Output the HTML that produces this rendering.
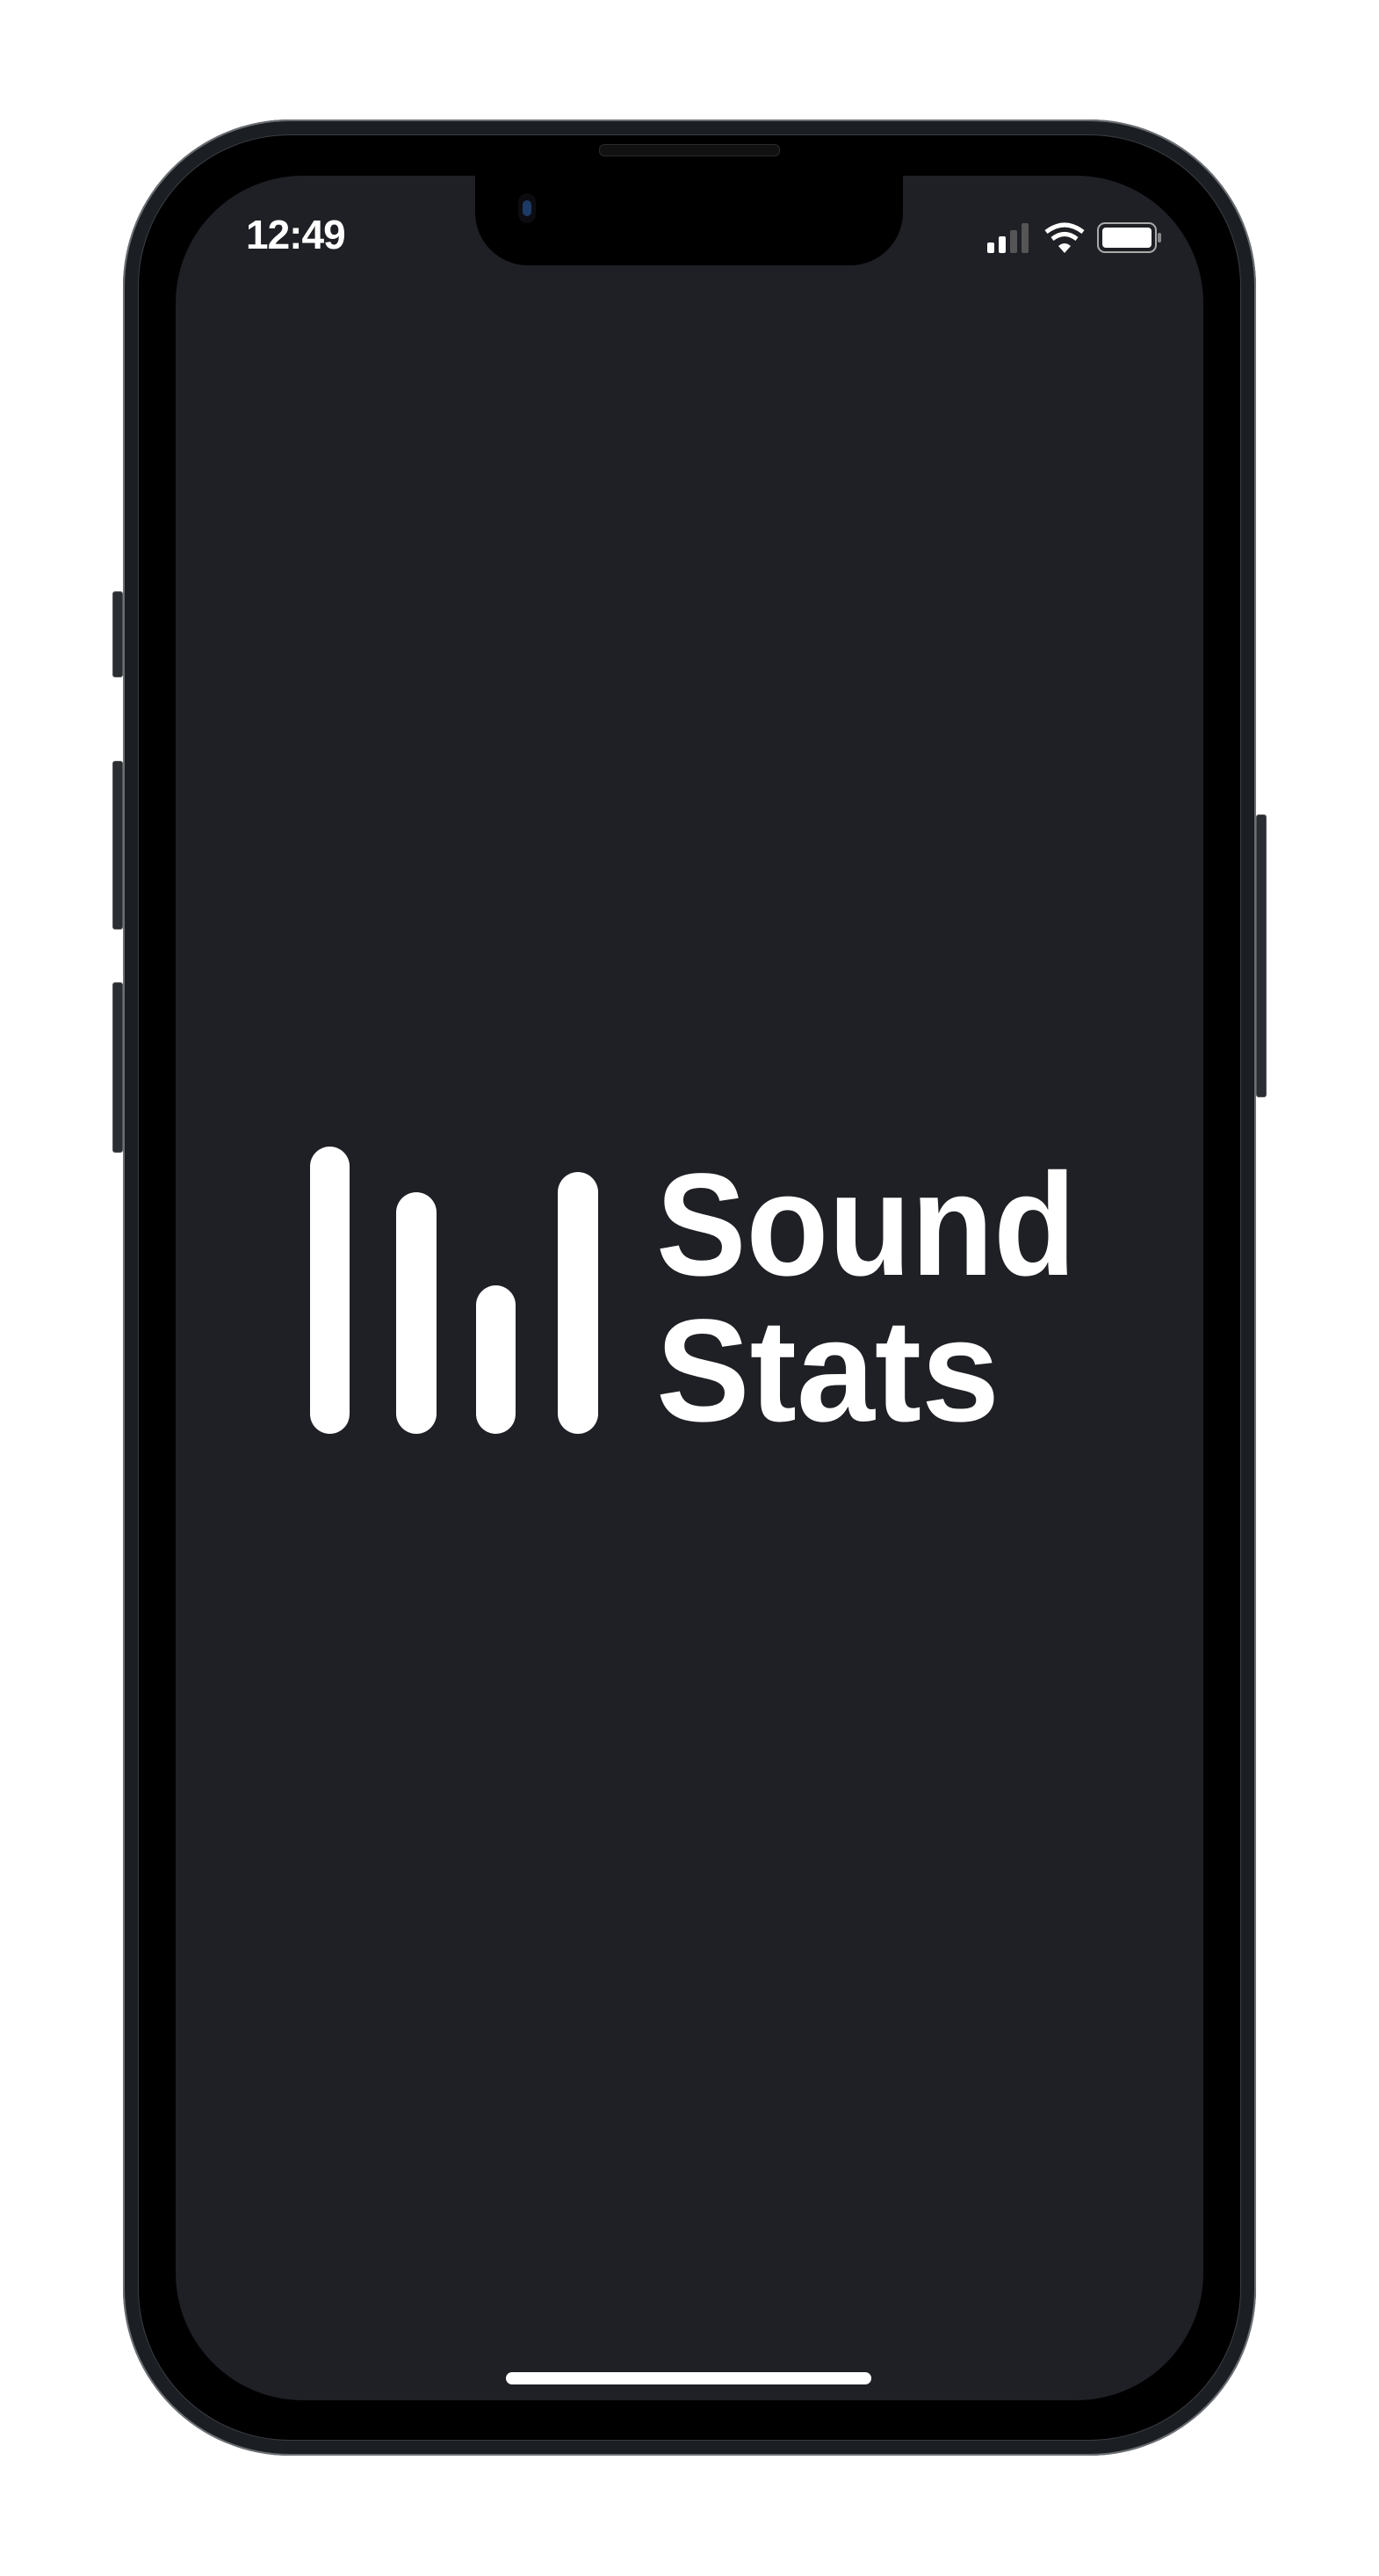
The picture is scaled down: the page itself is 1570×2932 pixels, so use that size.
<!DOCTYPE html>
<html><head><meta charset="utf-8"><style>
html,body{margin:0;padding:0;background:#fff;}
body{width:1570px;height:2932px;position:relative;overflow:hidden;font-family:"Liberation Sans",sans-serif;}
.btn{position:absolute;background:#2a2d32;border:1px solid #555;border-radius:3px;}
.body{position:absolute;left:140px;top:136px;width:1290px;height:2659px;border-radius:190px;background:#1b1e23;box-shadow:inset 0 0 0 2px #6b6e73;}
.bezel{position:absolute;left:158px;top:154px;width:1254px;height:2623px;border-radius:172px;background:#000;box-shadow:0 0 0 1px #3a3d42;}
.screen{position:absolute;left:200px;top:200px;width:1170px;height:2532px;border-radius:145px;background:#1f2025;overflow:hidden;}
.notch{position:absolute;left:541px;top:154px;width:487px;height:148px;background:#000;border-radius:0 0 60px 60px;}
.spk{position:absolute;left:682px;top:164px;width:204px;height:12px;border-radius:6px;background:#111;border:1px solid #2a2a2a;}
</style></head><body>
<div class="btn" style="left:128px;top:673px;width:10px;height:96px"></div>
<div class="btn" style="left:128px;top:866px;width:10px;height:190px"></div>
<div class="btn" style="left:128px;top:1118px;width:10px;height:192px"></div>
<div class="btn" style="left:1430px;top:927px;width:10px;height:320px"></div>
<div class="body"></div>
<div class="bezel"></div>
<div class="screen">
  <div style="position:absolute;left:80px;top:40px;color:#fff;font-weight:bold;font-size:46px;letter-spacing:-1px">12:49</div>
  <svg style="position:absolute;left:924px;top:52px" width="200" height="40" viewBox="0 0 200 40">
    <rect x="0" y="24" width="8" height="12" rx="2" fill="#fff"/>
    <rect x="13" y="17" width="8" height="19" rx="2" fill="#fff"/>
    <rect x="26" y="10" width="8" height="26" rx="2" fill="#555"/>
    <rect x="39" y="2" width="8" height="34" rx="2" fill="#555"/>
    <path d="M67 12 Q88 -4 109 12" stroke="#fff" stroke-width="5" fill="none"/>
    <path d="M74 20 Q88 9 102 20" stroke="#fff" stroke-width="5" fill="none"/>
    <path d="M81 28 L88 36 L95 28 Q88 22 81 28Z" fill="#fff"/>
    <rect x="126" y="2" width="66" height="33" rx="8" fill="none" stroke="#aaa" stroke-width="2"/>
    <rect x="131" y="7" width="56" height="23" rx="4" fill="#fff"/>
    <rect x="194" y="13" width="4" height="11" rx="2" fill="#888"/>
  </svg>
  <div style="position:absolute;left:376px;top:2500px;width:416px;height:14px;border-radius:7px;background:#fff"></div>
</div>
<div class="notch"></div>
<div class="spk"></div>
<div style="position:absolute;left:590px;top:220px;width:20px;height:34px;border-radius:10px;background:#0c0c10"><div style="position:absolute;left:5px;top:8px;width:10px;height:18px;border-radius:5px;background:#1d3a66"></div></div>
<svg style="position:absolute;left:0;top:0" width="1570" height="2932">
  <rect x="353" y="1305" width="45" height="327" rx="22.5" fill="#fff"/>
  <rect x="451" y="1357" width="46" height="275" rx="23" fill="#fff"/>
  <rect x="542" y="1463" width="45" height="169" rx="22.5" fill="#fff"/>
  <rect x="635" y="1334" width="46" height="298" rx="23" fill="#fff"/>
  <text x="747" y="1451" font-family="Liberation Sans" font-weight="bold" font-size="166" fill="#fff" textLength="478" lengthAdjust="spacingAndGlyphs">Sound</text>
  <text x="747" y="1617" font-family="Liberation Sans" font-weight="bold" font-size="166" fill="#fff" textLength="391" lengthAdjust="spacingAndGlyphs">Stats</text>
</svg>
</body></html>
